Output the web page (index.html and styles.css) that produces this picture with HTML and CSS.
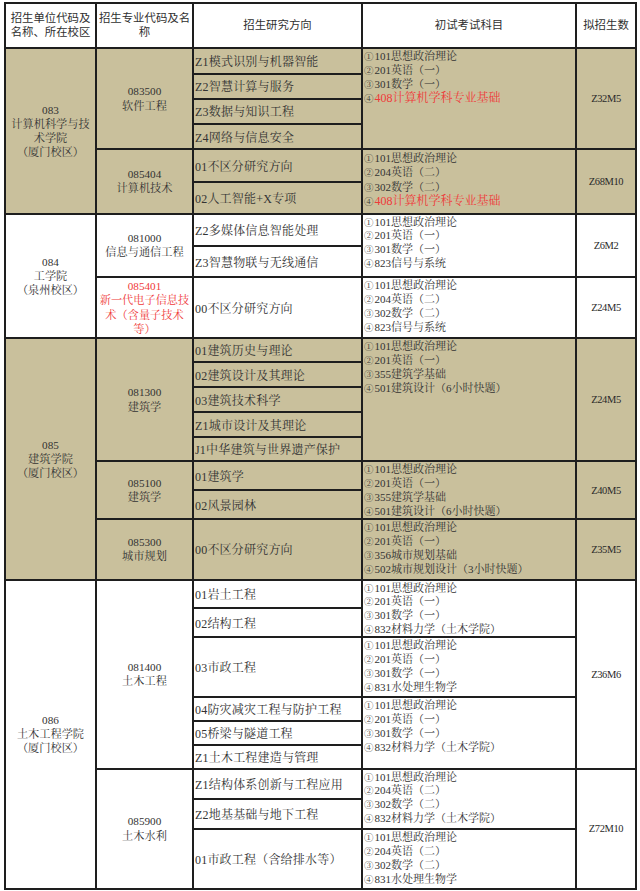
FILE: index.html
```html
<!DOCTYPE html>
<html lang="zh-CN">
<head>
<meta charset="utf-8">
<title>招生目录</title>
<link rel="stylesheet" href="styles.css">
</head>
<body>
<div class="sheet">
  <div class="cell hd c1">招生单位代码及<br>名称、所在校区</div>
  <div class="cell hd c2">招生专业代码及名<br>称</div>
  <div class="cell hd c3">招生研究方向</div>
  <div class="cell hd c4">初试考试科目</div>
  <div class="cell hd c5">拟招生数</div>

  <div class="cell unit c1 s6 tan">083<br>计算机科学与技<br>术学院<br>（厦门校区）</div>
  <div class="cell major c2 s4 tan">083500<br>软件工程</div>
  <div class="cell dir c3 tan">Z1模式识别与机器智能</div>
  <div class="cell exam c4 s4 tan"><span class="n">①</span>101思想政治理论<br><span class="n">②</span>201英语（一）<br><span class="n">③</span>301数学（一）<br><span class="n">④</span><span class="red big">408计算机学科专业基础</span></div>
  <div class="cell quota c5 s4 tan">Z32M5</div>
  <div class="cell dir c3 tan">Z2智慧计算与服务</div>
  <div class="cell dir c3 tan">Z3数据与知识工程</div>
  <div class="cell dir c3 tan">Z4网络与信息安全</div>
  <div class="cell major c2 s2 tan">085404<br>计算机技术</div>
  <div class="cell dir c3 tan">01不区分研究方向</div>
  <div class="cell exam c4 s2 tan loose"><span class="n">①</span>101思想政治理论<br><span class="n">②</span>204英语（二）<br><span class="n">③</span>302数学（二）<br><span class="n">④</span><span class="red big">408计算机学科专业基础</span></div>
  <div class="cell quota c5 s2 tan">Z68M10</div>
  <div class="cell dir c3 tan">02人工智能+X专项</div>

  <div class="cell unit c1 s3">084<br>工学院<br>（泉州校区）</div>
  <div class="cell major c2 s2">081000<br>信息与通信工程</div>
  <div class="cell dir c3">Z2多媒体信息智能处理</div>
  <div class="cell exam c4 s2"><span class="n">①</span>101思想政治理论<br><span class="n">②</span>201英语（一）<br><span class="n">③</span>301数学（一）<br><span class="n">④</span>823信号与系统</div>
  <div class="cell quota c5 s2">Z6M2</div>
  <div class="cell dir c3">Z3智慧物联与无线通信</div>
  <div class="cell major c2 red">085401<br>新一代电子信息技<br>术（含量子技术<br>等）</div>
  <div class="cell dir c3">00不区分研究方向</div>
  <div class="cell exam c4"><span class="n">①</span>101思想政治理论<br><span class="n">②</span>204英语（二）<br><span class="n">③</span>302数学（二）<br><span class="n">④</span>823信号与系统</div>
  <div class="cell quota c5">Z24M5</div>

  <div class="cell unit c1 s8 tan">085<br>建筑学院<br>（厦门校区）</div>
  <div class="cell major c2 s5 tan">081300<br>建筑学</div>
  <div class="cell dir c3 tan">01建筑历史与理论</div>
  <div class="cell exam c4 s5 tan"><span class="n">①</span>101思想政治理论<br><span class="n">②</span>201英语（一）<br><span class="n">③</span>355建筑学基础<br><span class="n">④</span>501建筑设计（6小时快题）</div>
  <div class="cell quota c5 s5 tan">Z24M5</div>
  <div class="cell dir c3 tan">02建筑设计及其理论</div>
  <div class="cell dir c3 tan">03建筑技术科学</div>
  <div class="cell dir c3 tan">Z1城市设计及其理论</div>
  <div class="cell dir c3 tan">J1中华建筑与世界遗产保护</div>
  <div class="cell major c2 s2 tan">085100<br>建筑学</div>
  <div class="cell dir c3 tan">01建筑学</div>
  <div class="cell exam c4 s2 tan"><span class="n">①</span>101思想政治理论<br><span class="n">②</span>201英语（一）<br><span class="n">③</span>355建筑学基础<br><span class="n">④</span>501建筑设计（6小时快题）</div>
  <div class="cell quota c5 s2 tan">Z40M5</div>
  <div class="cell dir c3 tan">02风景园林</div>
  <div class="cell major c2 tan">085300<br>城市规划</div>
  <div class="cell dir c3 tan">00不区分研究方向</div>
  <div class="cell exam c4 tan"><span class="n">①</span>101思想政治理论<br><span class="n">②</span>201英语（一）<br><span class="n">③</span>356城市规划基础<br><span class="n">④</span>502城市规划设计（3小时快题）</div>
  <div class="cell quota c5 tan">Z35M5</div>

  <div class="cell unit c1 s9">086<br>土木工程学院<br>（厦门校区）</div>
  <div class="cell major c2 s6">081400<br>土木工程</div>
  <div class="cell dir c3">01岩土工程</div>
  <div class="cell exam c4 s2"><span class="n">①</span>101思想政治理论<br><span class="n">②</span>201英语（一）<br><span class="n">③</span>301数学（一）<br><span class="n">④</span>832材料力学（土木学院）</div>
  <div class="cell quota c5 s6">Z36M6</div>
  <div class="cell dir c3">02结构工程</div>
  <div class="cell dir c3">03市政工程</div>
  <div class="cell exam c4"><span class="n">①</span>101思想政治理论<br><span class="n">②</span>201英语（一）<br><span class="n">③</span>301数学（一）<br><span class="n">④</span>831水处理生物学</div>
  <div class="cell dir c3">04防灾减灾工程与防护工程</div>
  <div class="cell exam c4 s3"><span class="n">①</span>101思想政治理论<br><span class="n">②</span>201英语（一）<br><span class="n">③</span>301数学（一）<br><span class="n">④</span>832材料力学（土木学院）</div>
  <div class="cell dir c3">05桥梁与隧道工程</div>
  <div class="cell dir c3">Z1土木工程建造与管理</div>
  <div class="cell major c2 s3">085900<br>土木水利</div>
  <div class="cell dir c3">Z1结构体系创新与工程应用</div>
  <div class="cell exam c4 s2"><span class="n">①</span>101思想政治理论<br><span class="n">②</span>204英语（二）<br><span class="n">③</span>302数学（二）<br><span class="n">④</span>832材料力学（土木学院）</div>
  <div class="cell quota c5 s3">Z72M10</div>
  <div class="cell dir c3">Z2地基基础与地下工程</div>
  <div class="cell dir c3">01市政工程（含给排水等）</div>
  <div class="cell exam c4"><span class="n">①</span>101思想政治理论<br><span class="n">②</span>204英语（二）<br><span class="n">③</span>302数学（二）<br><span class="n">④</span>831水处理生物学</div>
</div>
</body>
</html>
```

FILE: styles.css
```css
html, body {
  margin: 0;
  padding: 0;
  background: #ffffff;
}

.sheet {
  margin: 2px 0 0 4px;
  width: 633px;
  box-sizing: border-box;
  padding: 2px;
  background: #1e1e1e;
  display: grid;
  gap: 2px;
  grid-template-columns: 89px 95px 167px 212px 58px;
  grid-template-rows: 43px 24px 22.5px 23.5px 23px 31px 29.5px 30.5px 29px 59px 22px 23px 23px 23px 22px 27px 27px 58.5px 26.5px 27px 58px 22px 22px 21.5px 28.5px 28px 58px;
  font-family: "Liberation Serif", "Noto Serif CJK SC", "Noto Sans CJK SC", serif;
  color: #333333;
}

.cell {
  background: #ffffff;
  display: flex;
  align-items: center;
  justify-content: center;
  text-align: center;
  overflow: hidden;
  white-space: nowrap;
}

.tan {
  background: #c9c09c;
}

.c1 { grid-column: 1; }
.c2 { grid-column: 2; }
.c3 { grid-column: 3; }
.c4 { grid-column: 4; }
.c5 { grid-column: 5; }

.s2 { grid-row: span 2; }
.s3 { grid-row: span 3; }
.s4 { grid-row: span 4; }
.s5 { grid-row: span 5; }
.s6 { grid-row: span 6; }
.s8 { grid-row: span 8; }
.s9 { grid-row: span 9; }

.hd {
  font-family: "Liberation Sans", "Noto Sans CJK SC", sans-serif;
  font-size: 11.4px;
  line-height: 13.5px;
  color: #303030;
}

.unit {
  font-size: 11.2px;
  line-height: 14px;
}

.major {
  font-size: 11.2px;
  line-height: 14.5px;
}

.dir {
  justify-content: flex-start;
  text-align: left;
  font-size: 12px;
  letter-spacing: 0.2px;
  padding-left: 1px;
}

.exam {
  display: block;
  text-align: left;
  font-size: 11px;
  line-height: 13.9px;
  padding: 1px 0 0 1px;
}

.exam.loose {
  padding-top: 1px;
  line-height: 14.3px;
}

.n {
  font-family: "Noto Serif CJK SC", "Noto Sans CJK SC", serif;
  font-size: 9.5px;
  line-height: 1px;
  margin-right: 1px;
}

.quota {
  font-size: 10.5px;
  letter-spacing: -0.4px;
  color: #2a2a2a;
}

.red {
  color: #ef3a3a;
}

.big {
  font-size: 12px;
  line-height: 1px;
}
```
